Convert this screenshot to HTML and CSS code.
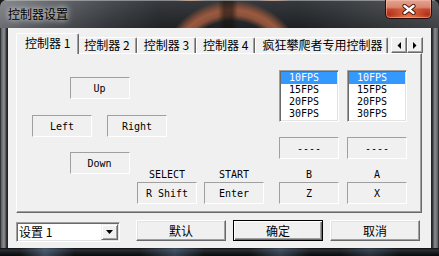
FILE: index.html
```html
<!DOCTYPE html>
<html lang="zh-CN">
<head>
<meta charset="utf-8">
<title>控制器设置</title>
<link rel="stylesheet" href="styles.css">
</head>
<body>
<div class="window">
  <div class="titlebar">
    <div class="title">控制器设置</div>
    <div class="close">
      <svg width="14" height="11" viewBox="0 0 14 11"><path d="M2.5 2 L11.5 9 M11.5 2 L2.5 9" stroke="#4a1208" stroke-width="4.2" stroke-linecap="round"/><path d="M2.5 2 L11.5 9 M11.5 2 L2.5 9" stroke="#fff" stroke-width="2.4" stroke-linecap="round"/></svg>
    </div>
  </div>
  <div class="client">
    <div class="tabstrip">
      <div class="tab active">控制器 1</div>
      <div class="tab">控制器 2</div>
      <div class="tab">控制器 3</div>
      <div class="tab">控制器 4</div>
      <div class="tab tab-long">疯狂攀爬者专用控制器</div>
      <div class="spin">
        <div class="spin-btn"><svg width="4" height="7" viewBox="0 0 4 7"><path d="M4 0 V7 L0.5 3.5 Z" fill="#000"/></svg></div>
        <div class="spin-btn"><svg width="4" height="7" viewBox="0 0 4 7"><path d="M0 0 V7 L3.5 3.5 Z" fill="#000"/></svg></div>
      </div>
    </div>
    <div class="panel">
      <div class="pad-side">
        <div class="dpad">
          <div class="key k-center">Up</div>
          <div class="key">Left</div>
          <div class="key">Right</div>
          <div class="key k-center">Down</div>
        </div>
        <div class="sys">
          <div class="field"><div class="label">SELECT</div><div class="key">R Shift</div></div>
          <div class="field"><div class="label">START</div><div class="key">Enter</div></div>
        </div>
      </div>
      <div class="btn-side">
        <div class="field">
          <div class="listbox">
            <div class="item sel">10FPS</div>
            <div class="item">15FPS</div>
            <div class="item">20FPS</div>
            <div class="item">30FPS</div>
          </div>
          <div class="key k-turbo">----</div>
          <div class="label label-gap">B</div>
          <div class="key">Z</div>
        </div>
        <div class="field">
          <div class="listbox">
            <div class="item sel">10FPS</div>
            <div class="item">15FPS</div>
            <div class="item">20FPS</div>
            <div class="item">30FPS</div>
          </div>
          <div class="key k-turbo">----</div>
          <div class="label label-gap">A</div>
          <div class="key">X</div>
        </div>
      </div>
    </div>
    <div class="bottombar">
      <div class="combo">
        <span class="combo-text">设置 1</span>
        <div class="combo-btn"><svg width="7" height="4" viewBox="0 0 7 4"><path d="M0 0 H7 L3.5 4 Z" fill="#000"/></svg></div>
      </div>
      <div class="button">默认</div>
      <div class="button default">确定</div>
      <div class="button">取消</div>
    </div>
  </div>
  <div class="bottomframe"></div>
</div>
</body>
</html>
```

FILE: styles.css
```css
* { box-sizing: border-box; margin: 0; padding: 0; }

body {
  margin: 0;
  width: 439px;
  height: 256px;
  overflow: hidden;
  background: #1a1a1a;
  font-family: "Noto Sans CJK SC", sans-serif;
  font-size: 12px;
  color: #000;
}

.window {
  width: 439px;
  height: 256px;
  display: flex;
  flex-direction: column;
  border-radius: 7px 7px 0 0;
  overflow: hidden;
  background:
    linear-gradient(90deg, #0c0c0c 0, #5a5c60 1px, #8e9094 4px, #4a4c50 6px, #1a1b1d 7px, transparent 8px) left top / 8px 100% no-repeat,
    linear-gradient(270deg, #0c0c0c 0, #5a5c60 1px, #8a8c90 4px, #4a4c50 6px, #1a1b1d 7px, transparent 8px) right top / 8px 100% no-repeat,
    #2a2c30;
}

/* ---------- title bar ---------- */
.titlebar {
  height: 28px;
  flex: none;
  display: flex;
  align-items: flex-start;
  padding-left: 8px;
  border-top: 1px solid rgba(220, 220, 220, 0.55);
  background:
    linear-gradient(90deg, transparent 218px, rgba(20, 16, 14, 0.55) 224px, rgba(20, 16, 14, 0.55) 232px, transparent 238px),
    radial-gradient(circle at 232px 72px, transparent 0 52px, rgba(150, 86, 60, 0.9) 58px, rgba(160, 92, 64, 0.95) 63px, rgba(150, 86, 60, 0.7) 67px, transparent 73px),
    linear-gradient(180deg, rgba(255,255,255,0.08) 0, rgba(0,0,0,0.15) 100%),
    linear-gradient(90deg, #7c7f84 0, #5a5d62 50px, #3a3d42 110px, #26292d 160px, #24272b 300px, #34373b 360px, #4a4c50 439px);
}

.title {
  padding-top: 5px;
  line-height: 16px;
  font-size: 12px;
  color: #000;
  text-shadow: 0 0 5px rgba(255,255,255,0.85), 0 0 10px rgba(255,255,255,0.6);
}

.close {
  margin-left: auto;
  margin-right: 7px;
  margin-top: -1px;
  width: 47px;
  height: 19px;
  display: flex;
  align-items: center;
  justify-content: center;
  border: 1px solid #2a0c06;
  border-top: none;
  border-radius: 0 0 5px 5px;
  box-shadow: inset 0 0 0 1px rgba(255, 200, 180, 0.45);
  background:
    radial-gradient(ellipse at 50% 100%, rgba(255, 150, 90, 0.7) 0, transparent 60%),
    linear-gradient(180deg, #e3a493 0, #d98670 40%, #c24a30 52%, #b3301b 80%, #c24a2c 100%);
}

/* ---------- client ---------- */
.client {
  width: 423px;
  height: 220px;
  flex: none;
  margin-left: 8px;
  background: #f0f0f0;
  display: flex;
  flex-direction: column;
}

.tabstrip {
  height: 25px;
  display: flex;
  align-items: flex-end;
  padding-left: 10px;
  padding-right: 8px;
}

.tab {
  position: relative;
  flex: none;
  height: 16px;
  padding: 0 6px;
  line-height: 14px;
  white-space: nowrap;
  border-top: 1px solid #fff;
  border-left: 1px solid #fff;
  border-right: 1px solid #696969;
  border-radius: 2px 2px 0 0;
  box-shadow: inset -1px 0 #a0a0a0;
  background: #f0f0f0;
}

.tab.active {
  height: 21px;
  margin: 0 -2px -1px;
  padding: 2px 8px 0;
  line-height: 14px;
  z-index: 1;
}

.tab-long {
  padding: 0 5px 0 6px;
}

.spin {
  margin-left: auto;
  align-self: flex-start;
  margin-top: 9px;
  display: flex;
  flex: none;
}

.spin-btn {
  width: 16px;
  height: 16px;
  display: flex;
  align-items: center;
  justify-content: center;
  border: 1px solid;
  border-color: #fff #696969 #696969 #fff;
  box-shadow: inset -1px -1px #a0a0a0;
  background: #f0f0f0;
}

/* ---------- tab page ---------- */
.panel {
  width: 406px;
  height: 160px;
  margin-left: 8px;
  display: flex;
  border: 1px solid;
  border-color: #fff #696969 #696969 #fff;
  box-shadow: inset -1px -1px #a0a0a0;
}

.pad-side {
  padding-left: 15px;
  padding-top: 23px;
}

.dpad {
  display: grid;
  grid-template-columns: 60px 60px;
  grid-template-rows: 23px 22px 22px;
  column-gap: 15px;
  row-gap: 15px;
}

.k-center {
  grid-column: 1 / span 2;
  justify-self: center;
  width: 60px;
}

.sys {
  display: flex;
  gap: 7px;
  margin-left: 105px;
  margin-top: -5px;
}

.field {
  width: 60px;
  display: flex;
  flex-direction: column;
}

.key {
  height: 22px;
  display: flex;
  align-items: center;
  justify-content: center;
  border: 1px solid;
  border-color: #a0a0a0 #fff #fff #a0a0a0;
  font-family: "DejaVu Sans Mono", monospace;
  font-size: 10px;
  white-space: pre;
}

.label {
  height: 12px;
  line-height: 12px;
  margin-bottom: 1px;
  text-align: center;
  font-family: "DejaVu Sans Mono", monospace;
  font-size: 10px;
}

.btn-side {
  margin-left: auto;
  padding-right: 14px;
  padding-top: 16px;
  display: flex;
  gap: 8px;
}

.listbox {
  height: 52px;
  padding: 1px;
  background: #fff;
  border: 1px solid;
  border-color: #a0a0a0 #fff #fff #a0a0a0;
  box-shadow: inset 1px 1px #696969, inset -1px -1px #e3e3e3;
}

.item {
  height: 12px;
  line-height: 12px;
  padding-left: 8px;
  overflow: hidden;
  font-family: "DejaVu Sans Mono", monospace;
  font-size: 10px;
}

.item.sel {
  background: #3399ff;
  color: #fff;
}

.k-turbo {
  margin-top: 15px;
}

.label-gap {
  margin-top: 10px;
}

/* ---------- bottom bar ---------- */
.bottombar {
  display: flex;
  align-items: flex-start;
  margin-top: 7px;
  padding-left: 8px;
}

.combo {
  width: 104px;
  height: 20px;
  margin-top: 2px;
  margin-right: 16px;
  display: flex;
  align-items: center;
  padding: 1px;
  background: #fff;
  border: 1px solid;
  border-color: #a0a0a0 #fff #fff #a0a0a0;
  box-shadow: inset 1px 1px #696969, inset -1px -1px #e3e3e3;
}

.combo-text {
  flex: 1;
  padding-left: 1px;
  line-height: 14px;
}

.combo-btn {
  width: 17px;
  height: 16px;
  display: flex;
  align-items: center;
  justify-content: center;
  border: 1px solid;
  border-color: #f0f0f0 #696969 #696969 #f0f0f0;
  box-shadow: inset 1px 1px #fff, inset -1px -1px #a0a0a0;
  background: #f0f0f0;
}

.button {
  width: 90px;
  height: 21px;
  display: flex;
  align-items: center;
  justify-content: center;
  line-height: 14px;
  border: 1px solid;
  border-color: #fff #696969 #696969 #fff;
  box-shadow: inset -1px -1px #a0a0a0, inset 1px 1px #e3e3e3;
  background: #f0f0f0;
}

.button + .button {
  margin-left: 7px;
}

.button.default {
  border-color: #000;
  box-shadow: inset 1px 1px #fff, inset -1px -1px #696969, inset -2px -2px #a0a0a0;
}

/* ---------- bottom frame ---------- */
.bottomframe {
  flex: 1;
  background:
    linear-gradient(90deg, transparent 20px, rgba(120, 150, 185, 0.45) 45px, transparent 75px,
      transparent 140px, rgba(110, 140, 175, 0.4) 175px, transparent 205px,
      transparent 250px, rgba(120, 150, 185, 0.35) 280px, transparent 310px,
      transparent 340px, rgba(100, 130, 160, 0.3) 370px, transparent 400px),
    linear-gradient(180deg, #0e0f11 0, #2a2f36 2px, #17191c 5px, #0a0a0b 8px);
}
```
